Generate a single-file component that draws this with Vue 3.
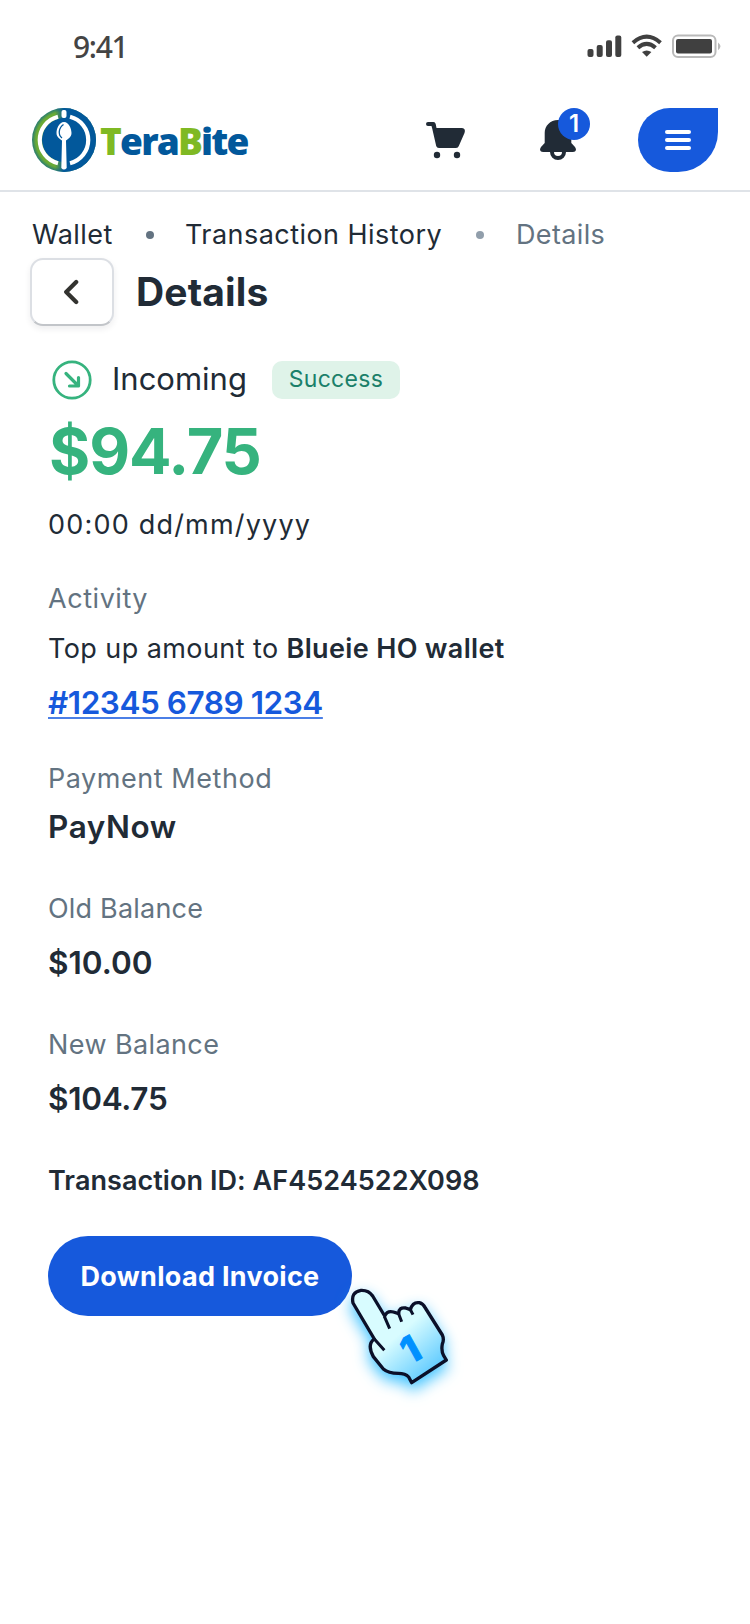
<template>
  <div class="screen">
    <div class="status-bar">
      <span class="time">9:41</span>
      <svg class="status-icons" width="136" height="26" viewBox="0 0 136 26">
        <g fill="#404040">
          <rect x="0.5" y="15" width="6" height="8" rx="2" />
          <rect x="9.700" y="11" width="6" height="12" rx="2" />
          <rect x="19" y="6.300" width="6" height="16.700" rx="2" />
          <rect x="28.300" y="1.500" width="6" height="21.500" rx="2" />
          <path d="M59.700 22.700L55 18.100Q59.700 14.700 64.400 18.100Z" />
          <rect x="89" y="5" width="36" height="14.500" rx="2" />
        </g>
        <g fill="none" stroke="#404040" stroke-width="4">
          <path d="M45.900 8.700Q59.700 -3.400 73.500 8.700" />
          <path d="M50.900 13.800Q59.700 6 68.500 13.800" />
        </g>
        <rect x="86" y="1.500" width="42.500" height="21.500" rx="5" fill="none" stroke="#b9b9b9" stroke-width="2" />
        <path d="M131 8.500Q136 12.300 131 16.200Z" fill="#b9b9b9" />
      </svg>
    </div>

    <header class="header">
      <div class="logo">
        <svg width="64" height="64" viewBox="0 0 64 64">
          <defs>
            <radialGradient id="rim" cx="32" cy="32" r="32" gradientUnits="userSpaceOnUse">
              <stop offset="0.88" stop-color="#69aa35" />
              <stop offset="1" stop-color="#277b73" />
            </radialGradient>
            <linearGradient id="rimFade" x1="0" x2="1" y1="0" y2="0">
              <stop offset="0.36" stop-color="#02589b" stop-opacity="0" />
              <stop offset="0.5" stop-color="#02589b" />
            </linearGradient>
          </defs>
          <circle cx="32" cy="32" r="32" fill="url(#rim)" />
          <circle cx="32" cy="32" r="32" fill="url(#rimFade)" />
          <circle cx="32" cy="32" r="22" fill="#02589b" />
          <g fill="none" stroke="#fff" stroke-width="4.200">
            <path d="M26 8.700A24 24 0 0 0 26 55.300" />
            <path d="M38 8.700A24 24 0 0 1 38 55.300" />
          </g>
          <rect x="29.500" y="2" width="5" height="8" rx="2" fill="#fff" />
          <path d="M32 14C27 14 24.500 21 24.500 25C24.500 29 28 31 30 32.500L29.300 60Q32 63 34.700 60L34 32.500C36 31 39.500 29 39.500 25C39.500 21 37 14 32 14Z" fill="#fff" />
          <path d="M31.500 16.500C26.500 20 25.800 27 30 30" fill="none" stroke="#02589b" stroke-width="1.300" />
        </svg>
        <span class="logo-name"><b>T</b>era<b>B</b>ite</span>
      </div>
      <div class="actions">
        <svg class="cart" width="40" height="40" viewBox="0 0 40 40" fill="#212b36">
          <path d="M2 2H7.500Q9.300 2 9.700 4L10.500 8H36Q40 8.500 38.500 13L32.800 26Q32.200 28 30 28H13Q10.700 28 10.200 26L6.200 8.500L5.500 6H2Q0 6 0 4Q0 2 2 2Z" />
          <circle cx="11" cy="35" r="3.200" />
          <circle cx="31" cy="35" r="3.200" />
        </svg>
        <div class="bell">
          <svg width="36" height="40" viewBox="0 0 36 40">
            <path d="M18 0C10 0 4.700 6 4.700 13V23L1 27Q0 28.300 0 30Q0.500 32 3 32H33Q35.500 32 36 30Q36 28.300 35 27L31.300 23V13C31.300 6 26 0 18 0Z" fill="#212b36" />
            <path d="M12 32A6 6 0 0 0 24 32" fill="none" stroke="#212b36" stroke-width="4" />
          </svg>
          <span class="count">1</span>
        </div>
        <button class="menu">
          <span></span>
          <span></span>
          <span></span>
        </button>
      </div>
    </header>

    <nav class="breadcrumb">
      <span class="crumb wallet">Wallet</span>
      <i class="dot"></i>
      <span class="crumb history">Transaction History</span>
      <i class="dot light"></i>
      <span class="crumb current">Details</span>
    </nav>

    <div class="title-row">
      <button class="back">
        <svg width="16" height="26" viewBox="0 0 16 26">
          <path d="M12.200 3L2.200 13L12.200 23" fill="none" stroke="#333330" stroke-width="4.200" stroke-linecap="round" stroke-linejoin="round" />
        </svg>
      </button>
      <h1>Details</h1>
    </div>

    <main class="details">
      <div class="direction">
        <svg width="40" height="40" viewBox="0 0 40 40" fill="none" stroke="#36b37e" stroke-width="2.800" stroke-linecap="round" stroke-linejoin="round">
          <circle cx="20" cy="20" r="18.200" />
          <path d="M14 13.500L26 25.500M26.500 17.500V26H17.500" stroke-width="3.200" />
        </svg>
        <span class="direction-name">Incoming</span>
        <span class="badge">Success</span>
      </div>
      <p class="amount">$94.75</p>
      <p class="date">00:00 dd/mm/yyyy</p>

      <p class="label activity">Activity</p>
      <p class="activity-text">Top up amount to <b>Blueie HO wallet</b></p>
      <p class="reference"><a>#12345 6789 1234</a></p>

      <section v-for="field in fields" :key="field.label" :class="['field', field.name]">
        <p class="label">{{ field.label }}</p>
        <p class="value">{{ field.value }}</p>
      </section>

      <p class="transaction-id">Transaction ID: AF4524522X098</p>
      <div class="download-wrap">
        <button class="download">Download Invoice</button>
        <svg class="pointer" width="150" height="190" viewBox="0 0 450 570">
          <defs>
            <linearGradient id="hand" x1="170" y1="290" x2="310" y2="450" gradientUnits="userSpaceOnUse">
              <stop offset="0.3" stop-color="#d8fcff" />
              <stop offset="1" stop-color="#63ccff" />
            </linearGradient>
          </defs>
          <path class="hand" d="M69 249Q62 216 93 211Q116 210 128 228L164 288Q172 271 190 276L206 281Q206 261 227 264L241 269Q248 245 268 248Q280 251 286 264L337 345Q343 358 337 372Q333 392 341 407L349 420L245 488L236 471Q226 460 205 460Q175 460 160 447L130 410Q110 373 133 357Z" fill="url(#hand)" />
          <path d="M163 289L179 326M205 279L215 305M240 267L249 284M133 357L163 391" class="fingers" />
          <text x="216" y="425" transform="rotate(-29 245 385)">1</text>
        </svg>
      </div>
    </main>
  </div>
</template>

<script setup>
import { ref } from "vue";

const fields = ref([
  { name: "method", label: "Payment Method", value: "PayNow" },
  { name: "old-balance", label: "Old Balance", value: "$10.00" },
  { name: "new-balance", label: "New Balance", value: "$104.75" },
]);
</script>

<style>
body {
  margin: 0;
  background: #fff;
}
</style>

<style scoped>
.screen {
  width: 750px;
  height: 1624px;
  overflow: hidden;
  background: #fff;
  color: #212b36;
  font-family: Inter, "Liberation Sans", sans-serif;
  font-size: 27px;
}

p,
h1 {
  margin: 0;
}

button {
  padding: 0;
  border: 0;
  font-family: inherit;
}

svg {
  display: block;
  flex: none;
}

.status-bar {
  display: flex;
  justify-content: space-between;
  align-items: center;
  box-sizing: border-box;
  height: 92px;
  padding: 2px 27px 0 73px;
}

.time {
  margin-bottom: 2px;
  color: #444;
  font-family: "Noto Sans", sans-serif;
  font-size: 30px;
  font-weight: 500;
  letter-spacing: -1.3px;
}

.header {
  display: flex;
  justify-content: space-between;
  align-items: center;
  box-sizing: border-box;
  height: 100px;
  padding: 0 32px 2px;
  border-bottom: 2px solid #dfe3e8;
}

.logo,
.actions {
  display: flex;
  align-items: center;
}

.logo-name {
  margin-left: 4px;
  color: #02589b;
  font-family: "Open Sans", sans-serif;
  font-size: 37px;
  font-weight: 800;
  letter-spacing: -1.8px;
}

.logo-name b {
  color: #7fb923;
  font-weight: 800;
}

.cart {
  margin-right: 74px;
}

.bell {
  position: relative;
  margin-right: 62px;
}

.count {
  position: absolute;
  top: -12px;
  left: 18px;
  width: 32px;
  height: 32px;
  border-radius: 50%;
  background: #1659dc;
  color: #fff;
  font-size: 24px;
  font-weight: 600;
  line-height: 32px;
  text-align: center;
}

.menu {
  display: flex;
  flex-direction: column;
  justify-content: center;
  align-items: center;
  gap: 4px;
  width: 80px;
  height: 64px;
  border-radius: 32px 0 40px 32px;
  background: #1659dc;
}

.menu span {
  width: 26px;
  height: 4px;
  border-radius: 2px;
  background: #fff;
}

.breadcrumb {
  display: flex;
  align-items: center;
  height: 40px;
  padding: 23px 32px 0;
  line-height: 40px;
}

.crumb {
  letter-spacing: 0.45px;
  white-space: nowrap;
}

.wallet {
  width: 81px;
}

.history {
  width: 258px;
}

.dot {
  flex: none;
  width: 8px;
  height: 8px;
  margin: 0 31px 0 33px;
  border-radius: 50%;
  background: #637381;
}

.dot.light {
  margin-right: 32px;
  background: #919eab;
}

.current {
  color: #637381;
  letter-spacing: 0.35px;
}

.title-row {
  display: flex;
  align-items: center;
  gap: 22px;
  height: 68px;
  margin-top: 3px;
  padding-left: 30px;
}

.back {
  display: flex;
  justify-content: center;
  align-items: center;
  box-sizing: border-box;
  width: 84px;
  height: 68px;
  border: 2px solid #dcdfe4;
  border-bottom-color: #c2c5c9;
  border-radius: 13px;
  background: #fff;
  box-shadow: 0 3px 6px rgba(33, 43, 54, 0.08);
}

h1 {
  font-size: 39px;
  font-weight: 700;
  letter-spacing: 0.15px;
  line-height: 68px;
}

.details {
  padding: 34px 48px 0;
  line-height: 40px;
}

.direction {
  display: flex;
  align-items: center;
  height: 40px;
  padding-left: 4px;
}

.direction-name {
  margin-left: 20px;
  padding-bottom: 2px;
  font-size: 31px;
}

.badge {
  box-sizing: border-box;
  width: 128px;
  height: 38px;
  margin-left: 25px;
  border-radius: 10px;
  background: #dff3e9;
  color: #1b806a;
  font-size: 23px;
  letter-spacing: 0.3px;
  line-height: 36px;
  text-align: center;
}

.amount {
  margin-top: 11px;
  padding-left: 1px;
  color: #36b37e;
  font-size: 63px;
  font-weight: 700;
  letter-spacing: -1.1px;
  line-height: 80px;
}

.date {
  margin-top: 14px;
  letter-spacing: 1.2px;
}

.label {
  color: #637381;
  letter-spacing: 0.55px;
}

.activity {
  margin-top: 34px;
}

.activity-text {
  margin-top: 10px;
  letter-spacing: 0.42px;
  white-space: nowrap;
}

.activity-text b {
  font-weight: 600;
  letter-spacing: 0.34px;
}

.reference {
  margin-top: 14px;
  color: #1659dc;
  font-size: 31.5px;
  font-weight: 600;
  letter-spacing: -0.45px;
}

.reference a {
  text-decoration: underline;
  text-decoration-thickness: 2px;
  text-underline-offset: 3px;
  text-decoration-color: #4b7fe6;
  text-decoration-skip-ink: none;
}

.field {
  margin-top: 42px;
}

.method {
  margin-top: 36px;
}

.value {
  margin-top: 14px;
  font-size: 31.5px;
  font-weight: 600;
}

.method .value {
  margin-top: 8px;
  letter-spacing: 0.6px;
}

.old-balance .label {
  letter-spacing: 0.2px;
}

.new-balance .label {
  letter-spacing: 0.4px;
}

.new-balance .value {
  letter-spacing: -0.3px;
}

.transaction-id {
  margin-top: 42px;
  font-weight: 600;
  letter-spacing: 0.06px;
}

.download-wrap {
  position: relative;
  margin-top: 35px;
}

.download {
  width: 304px;
  height: 80px;
  border-radius: 40px;
  background: #1659dc;
  color: #fff;
  font-size: 27px;
  font-weight: 700;
  letter-spacing: 0.3px;
}

.pointer {
  position: absolute;
  top: -16px;
  left: 282px;
  overflow: visible;
}

.hand {
  stroke: #0b1029;
  stroke-width: 10;
  stroke-linejoin: round;
  filter: drop-shadow(0 20px 22px rgba(0, 175, 255, 0.75));
}

.fingers {
  fill: none;
  stroke: #0b1029;
  stroke-width: 9;
}

.pointer text {
  fill: #0090ff;
  stroke: #0090ff;
  stroke-width: 3;
  font-size: 110px;
  font-weight: 800;
}
</style>
